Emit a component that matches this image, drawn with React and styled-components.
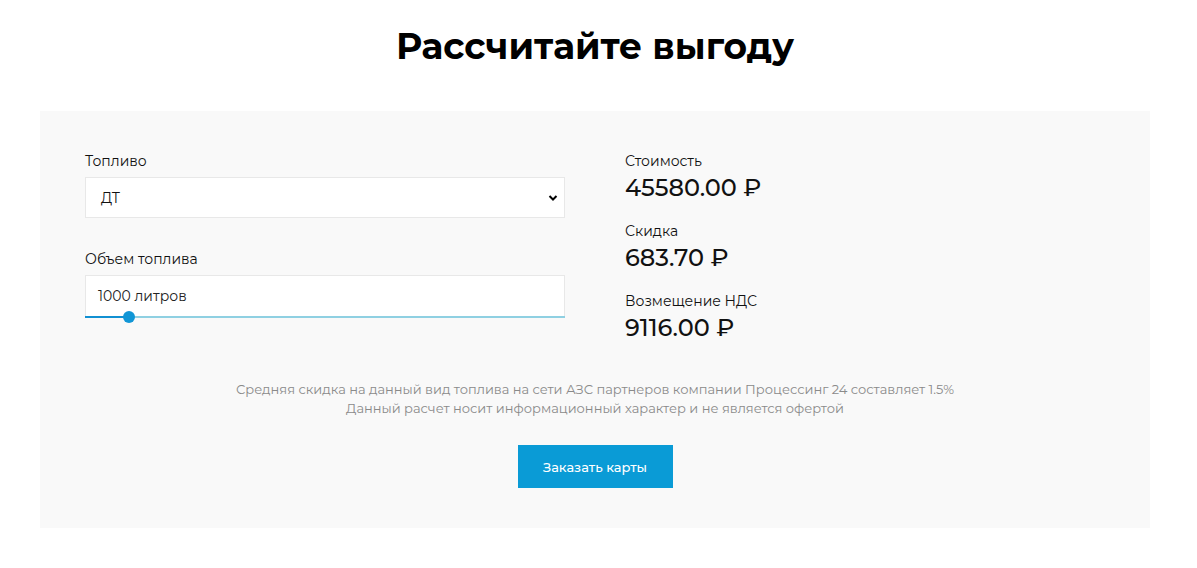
import React from "react";
import styled, { createGlobalStyle } from "styled-components";

const Global = createGlobalStyle`
  html, body { margin: 0; padding: 0; background: #fff; }
  body { font-family: "Montserrat", "Open Sans", "Noto Sans", sans-serif; color: #000; }
  * { box-sizing: border-box; }
`;

const Page = styled.div`
  width: 1110px;
  margin-left: 40px;
  padding-top: 20px;
`;

const Title = styled.h1`
  margin: 0 0 39px;
  text-align: center;
  font-size: 36px;
  line-height: 52px;
  font-weight: 700;
`;

const Panel = styled.section`
  background: #f9f9f9;
  padding: 41px 45px 40px;
`;

const Columns = styled.div`
  display: grid;
  grid-template-columns: 480px 1fr;
  column-gap: 60px;
`;

const Column = styled.div`
  display: flex;
  flex-direction: column;
`;

const Field = styled.div`
  display: flex;
  flex-direction: column;
  margin-bottom: ${(p) => p.$mb || 0}px;
`;

const Label = styled.div`
  font-size: 14px;
  line-height: 18px;
  color: #111;
  margin-bottom: 7px;
`;

const SelectBox = styled.div`
  position: relative;
  height: 41px;
  background: #fff;
  border: 1px solid #e8e8e8;
  display: flex;
  align-items: center;
  padding: 0 15px;
  font-size: 14px;
  color: #111;
`;

const Chevron = styled.svg`
  position: absolute;
  right: 6px;
  top: 50%;
  transform: translateY(-50%);
`;

const InputBox = styled.div`
  height: 41px;
  background: #fff;
  border: 1px solid #e8e8e8;
  border-bottom: none;
  display: flex;
  align-items: center;
  padding: 0 12px;
  font-size: 14px;
  color: #222;
`;

const Track = styled.div`
  position: relative;
  height: 2px;
  background: #8fd0e2;
`;

const Fill = styled.div`
  height: 2px;
  background: #1190d2;
`;

const Thumb = styled.div`
  position: absolute;
  top: 50%;
  width: 12px;
  height: 12px;
  border-radius: 50%;
  background: #1196d6;
  transform: translate(-50%, -50%);
`;

const StatLabel = styled.div`
  font-size: 14px;
  line-height: 18px;
  color: #111;
`;

const StatValue = styled.div`
  font-size: 24px;
  line-height: 36px;
  font-weight: 500;
  color: #111;
  margin-bottom: ${(p) => p.$mb || 0}px;
`;

const Notes = styled.div`
  margin-top: 34px;
  text-align: center;
  font-size: 13px;
  line-height: 19px;
  color: #8a8a8a;
`;

const ButtonRow = styled.div`
  display: flex;
  justify-content: center;
  margin-top: 27px;
`;

const Button = styled.button`
  width: 155px;
  height: 43px;
  border: none;
  background: #0a9bd6;
  color: #fff;
  font-family: inherit;
  font-size: 13px;
  font-weight: 500;
  cursor: pointer;
`;

export default function App() {
  const pct = 9.2;
  return (
    <Page>
      <Global />
      <Title>Рассчитайте выгоду</Title>
      <Panel>
        <Columns>
          <Column>
            <Field $mb={32}>
              <Label>Топливо</Label>
              <SelectBox>
                ДТ
                <Chevron width="10" height="8" viewBox="0 0 10 8">
                  <path d="M1.5 2 L5 5.5 L8.5 2" fill="none" stroke="#000" strokeWidth="2" />
                </Chevron>
              </SelectBox>
            </Field>
            <Field>
              <Label>Объем топлива</Label>
              <InputBox>1000 литров</InputBox>
              <Track>
                <Fill style={{ width: `${pct}%` }} />
                <Thumb style={{ left: `${pct}%` }} />
              </Track>
            </Field>
          </Column>
          <Column>
            <StatLabel>Стоимость</StatLabel>
            <StatValue $mb={16}>45580.00 ₽</StatValue>
            <StatLabel>Скидка</StatLabel>
            <StatValue $mb={16}>683.70 ₽</StatValue>
            <StatLabel>Возмещение НДС</StatLabel>
            <StatValue>9116.00 ₽</StatValue>
          </Column>
        </Columns>
        <Notes>
          Средняя скидка на данный вид топлива на сети АЗС партнеров компании Процессинг 24 составляет 1.5%
          <br />
          Данный расчет носит информационный характер и не является офертой
        </Notes>
        <ButtonRow>
          <Button>Заказать карты</Button>
        </ButtonRow>
      </Panel>
    </Page>
  );
}
